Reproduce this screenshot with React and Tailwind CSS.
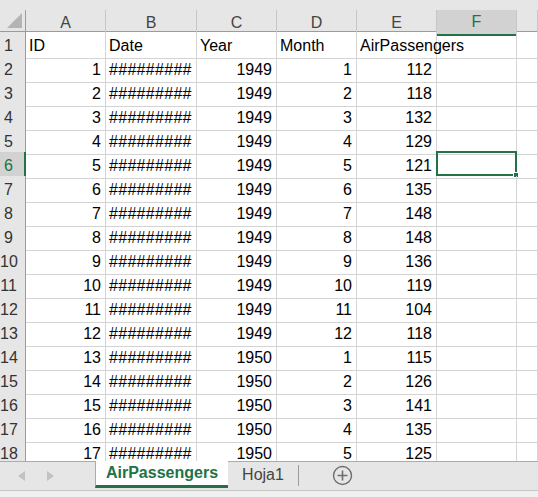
import React from 'react'

const passengers = [112, 118, 132, 129, 121, 135, 148, 148, 136, 119, 104, 118, 115, 126, 141, 135, 125]
const cols = ['A', 'B', 'C', 'D', 'E', 'F', '']

const rows = [
  [{ v: 'ID' }, { v: 'Date' }, { v: 'Year' }, { v: 'Month' }, { v: 'AirPassengers' }, { v: '' }, { v: '' }],
  ...passengers.map((p, i) => [
    { v: i + 1, r: true },
    { v: '#########', h: true },
    { v: i < 12 ? 1949 : 1950, r: true },
    { v: (i % 12) + 1, r: true },
    { v: p, r: true },
    { v: '' },
    { v: '' },
  ]),
]

const grid = 'grid grid-cols-[26px_80px_91px_80px_80px_80px_80px_1fr]'

export default function App() {
  return (
    <div className="w-[538px] h-[497px] overflow-hidden flex flex-col bg-white font-['Liberation_Sans',Arial,sans-serif] text-[16px] text-black">
      {/* top strip */}
      <div className="h-[10px] bg-[#e6e6e6] shrink-0" />

      {/* column headers */}
      <div className={`${grid} h-[22px] shrink-0 bg-[#e6e6e6] border-b border-[#9b9b9b]`}>
        <div className="relative border-r border-[#9b9b9b]">
          <div className="absolute left-[7px] top-[3px] w-0 h-0 border-l-[15px] border-l-transparent border-b-[15px] border-b-[#b4b4b4]" />
        </div>
        {cols.map((c, i) => (
          <div
            key={i}
            className={
              c === 'F'
                ? 'flex items-center justify-center bg-[#d2d2d2] text-[#217346] border-r border-[#c6c6c6] border-b-2 border-b-[#217346] -mb-px'
                : 'flex items-center justify-center text-[#444] border-r border-[#c6c6c6]'
            }
          >
            {c}
          </div>
        ))}
      </div>

      {/* body */}
      <div className="h-[429px] shrink-0 overflow-hidden">
        {rows.map((row, ri) => {
          const sel = ri === 5
          return (
            <div key={ri} className={`${grid} h-[24px]`}>
              <div
                className={
                  sel
                    ? 'flex items-center bg-[#d2d2d2] text-[#217346] border-b border-[#c6c6c6] border-r-2 border-r-[#217346]'
                    : 'flex items-center bg-[#e6e6e6] text-[#333] border-b border-[#c6c6c6] border-r border-r-[#9b9b9b]'
                }
              >
                <span className="w-[17px] text-center pt-[1px] whitespace-nowrap">{ri + 1}</span>
              </div>
              {row.map((cell, ci) => (
                <div
                  key={ci}
                  className={`relative flex items-center pt-[2px] border-r border-b border-[#d4d4d4] whitespace-nowrap overflow-visible ${
                    cell.r ? 'justify-end pr-[4px]' : 'pl-[3px]'
                  } ${cell.h ? 'tracking-[0.3px]' : ''}`}
                >
                  {cell.v}
                  {sel && ci === 5 && (
                    <div className="absolute -left-px -top-px w-[81px] h-[25px] border-2 border-[#217346]">
                      <div className="absolute -right-[4px] -bottom-[4px] w-[6px] h-[6px] bg-[#217346] border border-white" />
                    </div>
                  )}
                </div>
              ))}
            </div>
          )
        })}
      </div>

      {/* sheet tabs */}
      <div className="h-[29px] shrink-0 bg-[#e6e6e6] border-t border-[#ababab] flex items-stretch">
        <div className="w-[95px] flex items-center">
          <svg width="8" height="10" viewBox="0 0 8 10" className="ml-[18px]">
            <path d="M7 0 L0 5 L7 10 Z" fill="#c2c2c2" />
          </svg>
          <svg width="8" height="10" viewBox="0 0 8 10" className="ml-[20px]">
            <path d="M1 0 L8 5 L1 10 Z" fill="#c2c2c2" />
          </svg>
        </div>
        <div className="w-[133px] h-[27px] -mt-px bg-white border-l border-[#ababab] border-b-[3px] border-b-[#217346] flex items-center justify-center font-bold text-[#217346]">
          AirPassengers
        </div>
        <div className="w-[70px] flex items-center justify-center text-[#444] pb-[2px]">Hoja1</div>
        <div className="w-px h-[21px] mt-[3px] bg-[#9b9b9b]" />
        <div className="flex items-center pl-[33px] pb-[1px]">
          <svg width="21" height="21" viewBox="0 0 21 21">
            <circle cx="10.5" cy="10.5" r="9" fill="none" stroke="#6e6e6e" strokeWidth="1.4" />
            <path d="M10.5 5.5 V15.5 M5.5 10.5 H15.5" stroke="#6e6e6e" strokeWidth="1.6" />
          </svg>
        </div>
      </div>

      {/* bottom strip */}
      <div className="flex-1 bg-[#f0f0f0] border-t border-[#c6c6c6]" />
    </div>
  )
}
